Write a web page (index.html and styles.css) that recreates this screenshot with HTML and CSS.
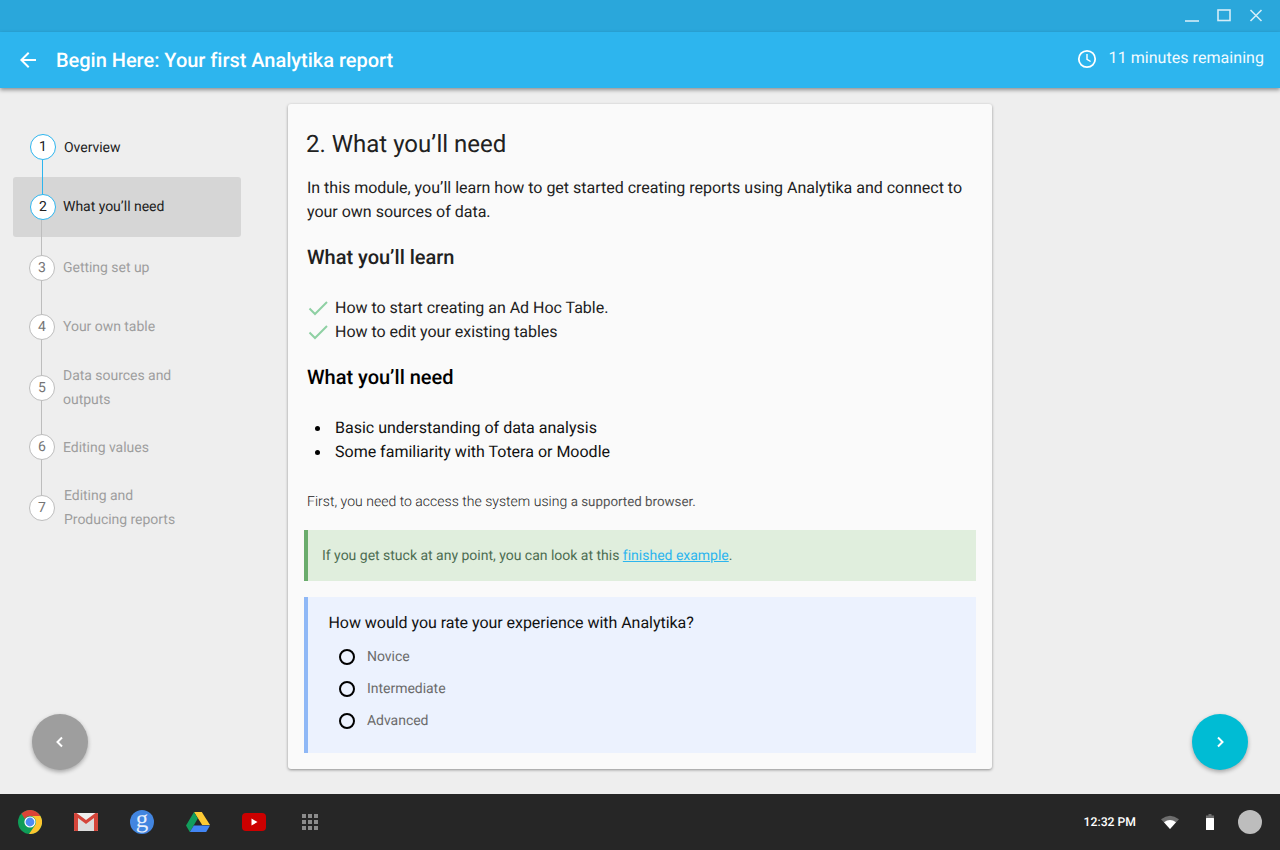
FILE: index.html
```html
<!DOCTYPE html>
<html lang="en">
<head>
<meta charset="utf-8">
<title>Begin Here: Your first Analytika report</title>
<link rel="stylesheet" href="styles.css">
</head>
<body>
<div class="screen">
  <div class="window-bar">
    <svg class="win-icon" width="16" height="16" viewBox="0 0 16 16"><path d="M1 13h14" stroke="#d4edf8" stroke-width="1.6" fill="none"/></svg>
    <svg class="win-icon" width="16" height="16" viewBox="0 0 16 16"><rect x="2" y="2" width="12" height="10.5" stroke="#d4edf8" stroke-width="1.6" fill="none"/></svg>
    <svg class="win-icon" width="16" height="16" viewBox="0 0 16 16"><path d="M2.5 2l11 11M13.5 2l-11 11" stroke="#d4edf8" stroke-width="1.6" fill="none"/></svg>
  </div>
  <header class="app-bar">
    <svg class="back" width="24" height="24" viewBox="0 0 24 24"><path d="M20 11H7.830l5.590-5.590L12 4l-8 8 8 8 1.410-1.410L7.830 13H20z" fill="#fff"/></svg>
    <h1 class="app-title">Begin Here: Your first Analytika report</h1>
    <div class="remaining">
      <svg width="20" height="20" viewBox="0 0 20 20"><circle cx="10" cy="10" r="8.200" fill="none" stroke="#fff" stroke-width="1.800"/><path d="M10 5v5.300l3.600 2.200" fill="none" stroke="#fff" stroke-width="1.400"/></svg>
      <span>11 minutes remaining</span>
    </div>
  </header>
  <main class="content">
    <nav class="steps">
      <div class="step step-done"><span class="num">1</span><span class="label">Overview</span></div>
      <div class="step step-current"><span class="num">2</span><span class="label">What you’ll need</span></div>
      <div class="step step-3"><span class="num">3</span><span class="label">Getting set up</span></div>
      <div class="step step-4"><span class="num">4</span><span class="label">Your own table</span></div>
      <div class="step step-5"><span class="num">5</span><span class="label">Data sources and<br>outputs</span></div>
      <div class="step step-6"><span class="num">6</span><span class="label">Editing values</span></div>
      <div class="step step-7"><span class="num">7</span><span class="label">Editing and<br>Producing reports</span></div>
    </nav>
    <article class="card">
      <h2 class="card-title">2. What you’ll need</h2>
      <p class="intro">In this module, you’ll learn how to get started creating reports using Analytika and connect to your own sources of data.</p>
      <h3 class="sub sub-learn">What you’ll learn</h3>
      <ul class="checks">
        <li><svg width="20" height="16" viewBox="0 0 20 16"><path d="M1.500 8.500l5.500 5.500L19 2" fill="none" stroke="#8ed0a3" stroke-width="2"/></svg>How to start creating an Ad Hoc Table.</li>
        <li><svg width="20" height="16" viewBox="0 0 20 16"><path d="M1.500 8.500l5.500 5.500L19 2" fill="none" stroke="#8ed0a3" stroke-width="2"/></svg>How to edit your existing tables</li>
      </ul>
      <h3 class="sub sub-need">What you’ll need</h3>
      <ul class="bullets">
        <li>Basic understanding of data analysis</li>
        <li>Some familiarity with Totera or Moodle</li>
      </ul>
      <p class="first">First, you need to access the system using <span class="small">a supported browser.</span></p>
      <div class="note">If you get stuck at any point, you can look at this <a href="#">finished example</a>.</div>
      <form class="quiz">
        <p class="question">How would you rate your experience with Analytika?</p>
        <div class="option"><span class="radio"></span>Novice</div>
        <div class="option"><span class="radio"></span>Intermediate</div>
        <div class="option"><span class="radio"></span>Advanced</div>
      </form>
    </article>
    <button class="fab fab-prev" type="button" aria-label="Previous"><svg width="12" height="12" viewBox="0 0 12 12"><path d="M8 1.500L3.500 6 8 10.500" fill="none" stroke="#fff" stroke-width="2"/></svg></button>
    <button class="fab fab-next" type="button" aria-label="Next"><svg width="12" height="12" viewBox="0 0 12 12"><path d="M4 1.500L8.500 6 4 10.500" fill="none" stroke="#fff" stroke-width="2"/></svg></button>
  </main>
  <footer class="shelf">
    <svg class="app" width="24" height="24" viewBox="0 0 24 24">
      <circle cx="12" cy="12" r="12" fill="#0f9d58"/>
      <path d="M22.390 6H12A6 6 0 0 1 17.200 15L11 23.960A12 12 0 0 0 22.390 6z" fill="#fdc52f"/>
      <path d="M3.510 3.510A12 12 0 0 1 22.390 6H12A6 6 0 0 0 6.800 9z" fill="#db4437"/>
      <circle cx="12" cy="12" r="5.600" fill="#fff"/><circle cx="12" cy="12" r="4.400" fill="#4c8bf5"/>
    </svg>
    <svg class="app" width="24" height="24" viewBox="0 0 24 24">
      <rect x="0" y="3" width="24" height="18" rx="1" fill="#efefef"/>
      <path d="M12 14l8-6v13H4V8z" fill="#dcdcdc"/>
      <path d="M4 21V8l8 6 8-6v13h3a1 1 0 0 0 1-1V4a1 1 0 0 0-1-1h-1.500L12 10 2.500 3H1a1 1 0 0 0-1 1v16a1 1 0 0 0 1 1z" fill="#d4453a"/>
    </svg>
    <span class="app g-app">g</span>
    <svg class="app" width="24" height="24" viewBox="0 0 24 24">
      <path d="M8 2h7.800L24 15h-7.800z" fill="#fcc934"/>
      <path d="M8 2L0 15.500 3.800 22l8-13.500z" fill="#129d5c"/>
      <path d="M3.800 22H20.200L24 15.500H7.800z" fill="#4285f4"/>
    </svg>
    <svg class="app" width="24" height="24" viewBox="0 0 24 24">
      <rect x="0" y="3" width="24" height="18" rx="4" fill="#cc0000"/>
      <path d="M9.500 8.500v7l6-3.500z" fill="#fff"/>
    </svg>
    <svg class="app" width="24" height="24" viewBox="0 0 24 24" fill="#8c8c8c">
      <rect x="4" y="4" width="4" height="4"/><rect x="10" y="4" width="4" height="4"/><rect x="16" y="4" width="4" height="4"/>
      <rect x="4" y="10" width="4" height="4"/><rect x="10" y="10" width="4" height="4"/><rect x="16" y="10" width="4" height="4"/>
      <rect x="4" y="16" width="4" height="4"/><rect x="10" y="16" width="4" height="4"/><rect x="16" y="16" width="4" height="4"/>
    </svg>
    <div class="tray">
      <span class="clock">12:32 PM</span>
      <svg width="18" height="14" viewBox="0 0 18 14"><path d="M0 4.300Q9-3 18 4.300L9 14z" fill="#6d6d6d"/><path d="M3 7.300Q9 2.800 15 7.300L9 14z" fill="#fff"/></svg>
      <svg class="battery" width="8" height="16" viewBox="0 0 8 16"><path d="M2.500 0h3v1.500H8V16H0V1.500h2.500z" fill="#6d6d6d"/><rect y="4" width="8" height="12" rx=".5" fill="#fff"/></svg>
      <span class="avatar"></span>
    </div>
  </footer>
</div>
</body>
</html>
```
FILE: styles.css
```css
* { box-sizing: border-box; }
html, body { margin: 0; padding: 0; }
body { font-family: Roboto, "Noto Sans", sans-serif; color: #212121; text-rendering: geometricPrecision; }
h1, h2, h3, p, ul { margin: 0; padding: 0; }
ul { list-style: none; }

.screen { width: 1280px; height: 850px; display: flex; flex-direction: column; overflow: hidden; background: #eee; }

.window-bar { height: 32px; flex: none; background: #2aa7db; display: flex; justify-content: flex-end; align-items: center; gap: 16px; padding: 0 16px 0 0; }
.win-icon { display: block; }

.app-bar { height: 56px; flex: none; background: #2db5ee; color: #fff; display: flex; align-items: center; padding: 0 16px; box-shadow: 0 2px 4px rgba(0,0,0,.4); position: relative; z-index: 2; }
.back { margin-right: 16px; }
.app-title { font-size: 20px; font-weight: 500; line-height: 28px; letter-spacing: -.025px; }
.remaining { margin-left: auto; display: flex; align-items: center; gap: 12px; font-size: 16px; letter-spacing: .05px; padding-bottom: 5px; color: #f2fbff; }
.remaining svg { margin-top: 2px; }

.content { flex: 1; position: relative; display: flex; align-items: flex-start; padding: 16px 0 0 13px; }

.steps { width: 228px; margin: 14px 47px 0 0; flex: none; font-size: 14px; line-height: 24px; color: #9e9e9e; }
.step { display: flex; align-items: center; gap: 8px; height: 60px; padding-left: 16px; position: relative; border-radius: 3px; }
.step::after { content: ""; position: absolute; left: 28px; top: 42px; height: 40px; width: 1px; background: #bdbdbd; z-index: 1; }
.step-7::after { display: none; }
.num { width: 26px; height: 26px; flex: none; border-radius: 50%; background: #fff; border: 1px solid #bdbdbd; display: flex; align-items: center; justify-content: center; font-size: 14px; color: #757575; position: relative; z-index: 2; }
.label { padding-top: 2px; letter-spacing: -.03px; }

.step-done { height: 59px; padding-bottom: 1px; color: #212121; }
.step-done::after { background: #2db5ee; left: 29px; }
.step-done .num, .step-current .num { border-color: #2db5ee; color: #212121; margin-left: 1px; }
.step-current { height: 60px; padding-bottom: 1px; background: #d6d6d6; color: #212121; gap: 7px; }
.step-current .label { padding-top: 0; }
.step-3 { padding-top: 2px; }
.step-3 .label { margin-bottom: 2px; }
.step-4 { height: 59px; padding-top: 1px; }
.step-4 .label { margin-bottom: 2px; }
.step-5 { height: 61px; padding-top: 2px; }
.step-5 .label { margin-bottom: 2px; }
.step-7 { height: 61px; padding-top: 1px; }
.step-7 .label { margin: 0 0 3px 1px; }

.card { width: 704px; height: 665px; flex: none; background: #fafafa; border-radius: 3px; box-shadow: 0 1px 3px rgba(0,0,0,.4); padding: 24px 16px 0 16px; }
.card-title { font-size: 24px; font-weight: 400; line-height: 32px; margin-left: 2px; }
.intro { font-size: 16px; line-height: 24px; margin: 16px 0 0 3px; letter-spacing: -.012px; }
.sub { font-size: 20px; font-weight: 500; line-height: 28px; margin-left: 3px; letter-spacing: -.02px; }
.sub-learn { margin-top: 19px; }
.sub-need { margin-top: 19px; color: #000; }
.checks { margin-top: 25px; font-size: 16px; line-height: 24px; letter-spacing: -.02px; }
.checks li { display: flex; align-items: center; padding-left: 4px; gap: 7px; }
.bullets { margin-top: 25px; font-size: 16px; line-height: 24px; color: #111; }
.bullets li { padding-left: 31px; position: relative; }
.bullets li::before { content: ""; position: absolute; left: 11px; top: 10px; width: 5px; height: 5px; border-radius: 50%; background: #000; }
.first { margin: 26px 0 0 3px; font-size: 14px; font-weight: 300; line-height: 24px; color: #222; letter-spacing: .02px; }
.small { font-size: 13.330px; font-weight: 400; color: #555; letter-spacing: 0; }
.note { margin-top: 15px; height: 51px; background: #e0eedd; border-left: 4px solid #6aac6c; padding: 1px 0 0 14px; font-size: 14px; line-height: 50px; color: #4d6d52; letter-spacing: -.01px; }
.note a { color: #2db5ee; }
.quiz { margin-top: 16px; height: 156px; background: #ecf2fe; border-left: 4px solid #8fb8f6; padding: 14px 0 0 20px; }
.question { font-size: 16px; line-height: 24px; color: #111; margin-bottom: 5px; letter-spacing: -.04px; padding-left: .5px; }
.option { height: 32px; display: flex; align-items: center; gap: 12px; padding-top: 2px; font-size: 14px; color: #6b6b6b; padding-left: 11px; letter-spacing: -.03px; }
.radio { width: 16px; height: 16px; border: 2px solid #000; border-radius: 50%; flex: none; }

.fab { position: absolute; width: 56px; height: 56px; border: 0; border-radius: 50%; display: flex; align-items: center; justify-content: center; box-shadow: 0 2px 4px rgba(0,0,0,.3); padding: 0; }
.fab-prev { left: 32px; top: 626px; background: #9e9e9e; }
.fab-next { left: 1192px; top: 626px; background: #00bcd4; }

.shelf { height: 56px; flex: none; background: #262626; display: flex; align-items: center; padding: 0 16px 0 18px; gap: 32px; }
.app { display: block; flex: none; }
.g-app { width: 24px; height: 24px; border-radius: 50%; background: #4285e0; color: #e8effc; font-family: "Liberation Serif", serif; font-size: 25px; line-height: 19px; text-align: center; flex: none; }
.tray { margin-left: auto; display: flex; align-items: center; }
.clock { font-size: 12.200px; font-weight: 500; color: #fff; margin-right: 25px; }
.battery { margin: 0 24px 0 27px; }
.avatar { width: 24px; height: 24px; border-radius: 50%; background: #bdbdbd; margin-right: 2px; }
```
